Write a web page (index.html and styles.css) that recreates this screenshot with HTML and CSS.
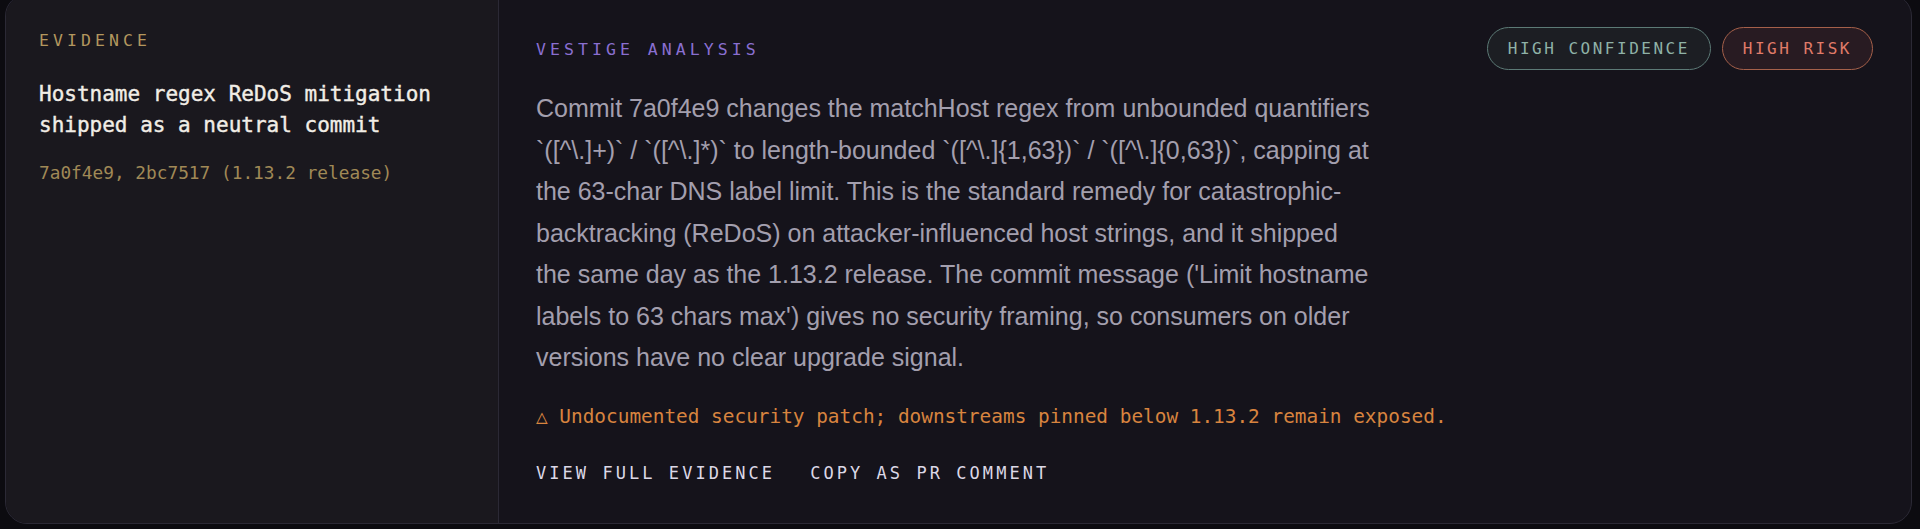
FILE: index.html
```html
<!DOCTYPE html>
<html lang="en">
<head>
<meta charset="utf-8">
<title>Vestige finding</title>
<link rel="stylesheet" href="styles.css">
</head>
<body>
<article class="card">
  <section class="evidence">
    <div class="eyebrow eyebrow-gold">EVIDENCE</div>
    <h2 class="title">Hostname regex ReDoS mitigation shipped as a neutral commit</h2>
    <div class="refs">7a0f4e9, 2bc7517 (1.13.2 release)</div>
  </section>
  <section class="analysis">
    <header class="analysis-head">
      <div class="eyebrow eyebrow-purple">VESTIGE ANALYSIS</div>
      <div class="badges">
        <span class="badge badge-conf">HIGH CONFIDENCE</span>
        <span class="badge badge-risk">HIGH RISK</span>
      </div>
    </header>
    <p class="body">Commit 7a0f4e9 changes the matchHost regex from unbounded quantifiers <code>`([^\.]+)`</code> / <code>`([^\.]*)`</code> to length-bounded <code>`([^\.]{1,63})`</code> / <code>`([^\.]{0,63})`</code>, capping at the 63-char DNS label limit. This is the standard remedy for catastrophic-backtracking (ReDoS) on attacker-influenced host strings, and it shipped the same day as the 1.13.2 release. The commit message ('Limit hostname labels to 63 chars max') gives no security framing, so consumers on older versions have no clear upgrade signal.</p>
    <p class="warning">△ Undocumented security patch; downstreams pinned below 1.13.2 remain exposed.</p>
    <nav class="actions">
      <a class="action" href="#">VIEW FULL EVIDENCE</a>
      <a class="action" href="#">COPY AS PR COMMENT</a>
    </nav>
  </section>
</article>
</body>
</html>
```

FILE: styles.css
```css
html, body {
  margin: 0;
  padding: 0;
  background: #0c0b10;
}

body {
  padding: 0 8px 0 5px;
  height: 529px;
  overflow: hidden;
  font-family: "DejaVu Sans Mono", "Liberation Mono", monospace;
}

.card {
  margin-top: -6px;
  height: 530px;
  box-sizing: border-box;
  border: 1px solid #2b2935;
  border-radius: 22px;
  overflow: hidden;
  display: grid;
  grid-template-columns: 493px 1fr;
  background: #15131b;
}

.evidence {
  background: #1a181e;
  border-right: 1px solid #2b2935;
  padding: 36px 30px 0 33px;
}

.eyebrow {
  font-size: 16.5px;
  line-height: 20px;
  letter-spacing: 4.05px;
}

.eyebrow-gold {
  color: #b3975e;
}

.eyebrow-purple {
  color: #8a6fd1;
}

.title {
  margin: 28px 0 0;
  font-size: 21px;
  line-height: 31px;
  font-weight: 400;
  -webkit-text-stroke: 0.4px #f1ede6;
  color: #f1ede6;
}

.refs {
  margin-top: 20px;
  font-size: 17.8px;
  line-height: 24px;
  color: #a08956;
}

.analysis {
  padding: 32px 38px 0 37px;
  display: flex;
  flex-direction: column;
}

.analysis-head {
  display: flex;
  justify-content: space-between;
  align-items: flex-start;
}

.analysis-head .eyebrow {
  margin-top: 13px;
}

.badges {
  display: flex;
  gap: 11px;
}

.badge {
  display: inline-flex;
  align-items: center;
  height: 43px;
  box-sizing: border-box;
  padding: 0 20px;
  border-radius: 22px;
  font-size: 16px;
  letter-spacing: 2.5px;
  border: 1.5px solid;
}

.badge-conf {
  background: #1c1e23;
  border-color: #5c7a76;
  color: #8fb2a7;
}

.badge-risk {
  background: #281b22;
  border-color: #a5604a;
  color: #e07b69;
}

.body {
  margin: 18px 0 0;
  max-width: 838px;
  font-family: "Liberation Sans", Arial, sans-serif;
  font-size: 25px;
  line-height: 41.5px;
  color: #a39fae;
}

.body code {
  font: inherit;
  color: inherit;
}

.warning {
  margin: 25px 0 0;
  font-size: 19.4px;
  line-height: 26px;
  color: #d8843f;
}

.actions {
  margin-top: 33px;
  display: flex;
  gap: 35px;
}

.action {
  font-size: 17px;
  letter-spacing: 3.05px;
  color: #dcd8e6;
  text-decoration: none;
}
```
